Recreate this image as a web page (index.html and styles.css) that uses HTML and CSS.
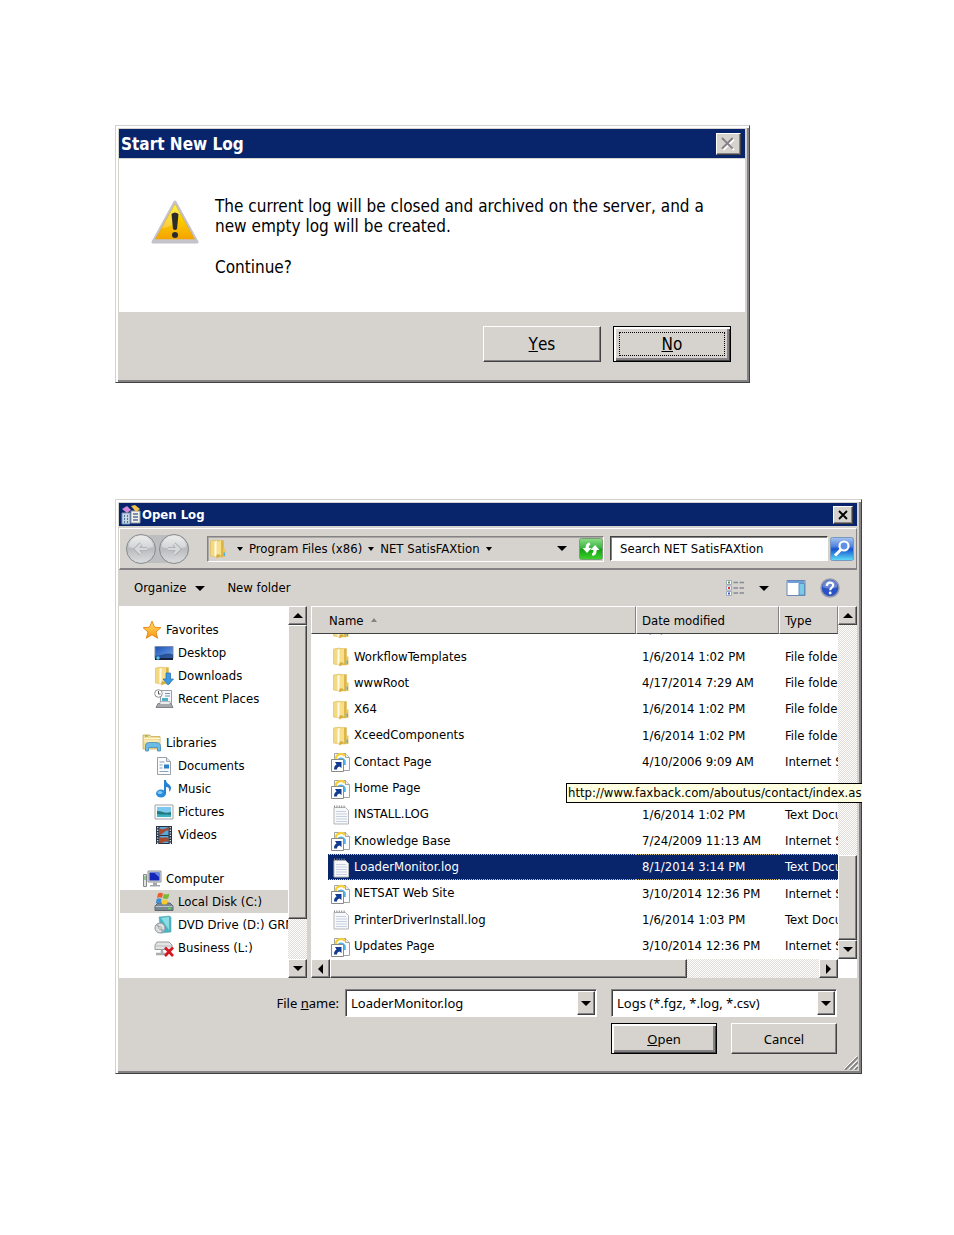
FILE: index.html
```html
<!DOCTYPE html>
<html lang="en">
<head>
    <meta charset="UTF-8">
    <meta name="viewport" content="width=device-width, initial-scale=1.0">
    <title>Start New Log / Open Log</title>
    <link rel="stylesheet" href="styles.css">
</head>
<body>
    <!-- Shared icons -->
    <svg class="sprite" aria-hidden="true">
        <defs>
            <linearGradient id="gFolder" x1="0" x2="1"><stop offset="0" stop-color="#f3d26a"/><stop offset="1" stop-color="#d9ad3e"/></linearGradient>
            <linearGradient id="gWarn" x1="0" y1="0" x2="0" y2="1"><stop offset="0" stop-color="#fff000"/><stop offset="1" stop-color="#f5a300"/></linearGradient>
            <linearGradient id="gOrb" x1="0" y1="0" x2="0" y2="1"><stop offset="0" stop-color="#e6e6e6"/><stop offset=".5" stop-color="#b9bbbd"/><stop offset="1" stop-color="#dcdedf"/></linearGradient>
            <linearGradient id="gScreen" x1="0" y1="0" x2="1" y2="1"><stop offset="0" stop-color="#1b50b5"/><stop offset="1" stop-color="#6fa6ea"/></linearGradient>
            <linearGradient id="gStar" x1="0" y1="0" x2="0" y2="1"><stop offset="0" stop-color="#ffe36a"/><stop offset="1" stop-color="#ff9412"/></linearGradient>
        </defs>
        <symbol id="folder" viewBox="0 0 20 20">
            <path d="M2.500 2l6-1v17l-6-1z" fill="#f3da82" stroke="#dcb95a" stroke-width=".6"/>
            <path d="M8 1.500h7.500V18H8z" fill="url(#gFolder)" stroke="#dcb95a" stroke-width=".5"/>
            <path d="M6.500 3L9 1.500v15L6.500 18z" fill="#fffbe8"/>
            <path d="M8.500 3L13 1.500V16l-4.500 3.500z" fill="#f7df8c"/>
            <path d="M8.500 19.500L12 17v-1.500H8.500z" fill="#d5ab3c"/>
            <path d="M15 9.500h2.500V18H15z" fill="#ecc65f"/>
            <path d="M15.500 13.500H17V17h-1.500z" fill="#4ab5dc"/>
        </symbol>
        <symbol id="weblink" viewBox="0 0 20 20">
            <path d="M3.500 1.500h11l4 4v13h-15z" fill="#fdfdfd" stroke="#a3a3a3"/>
            <path d="M14.500 1.500v4h4" fill="#eee" stroke="#a3a3a3"/>
            <path d="M5 7.500a5 4.500 0 0 1 9-3.500" fill="none" stroke="#f6cf3c" stroke-width="2.200"/>
            <path d="M7 8a4 4 0 0 1 6.500 1v4" fill="none" stroke="#4fb3ea" stroke-width="2.500"/>
            <path d="M.5 7.500h12v12H.5z" fill="#fff" stroke="#8a8a8a"/>
            <path d="M3 17.500c0-3 1-4 2.500-5L4 10h6.500v6L8.500 14.500c-2 .8-2.500 1.500-2.500 3z" fill="#123c91"/>
        </symbol>
        <symbol id="textfile" viewBox="0 0 20 20">
            <path d="M3 2.500h11.500l3 3v13.500H3z" fill="#f7f8fa" stroke="#b3b5ba"/>
            <path d="M3 1.500h11" stroke="#888" stroke-width="2" stroke-dasharray="1 1.400"/>
            <path d="M5 6.500h10M5 9h11M5 11.500h11M5 14h11M5 16.500h11" stroke="#c7cfe0"/>
        </symbol>
        <symbol id="star" viewBox="0 0 20 20">
            <path d="M10 1.200l2.500 6 6.300.5-4.800 4.200 1.600 6.300L10 14.800l-5.600 3.400L6 11.900 1.200 7.700l6.300-.5z" fill="url(#gStar)" stroke="#e88a1a" stroke-linejoin="round"/>
        </symbol>
        <symbol id="desktop" viewBox="0 0 20 20">
            <path d="M1 3.500h18v12H1z" fill="url(#gScreen)" stroke="#7d8ea8"/>
            <path d="M1 12.500c7 1 11-4 18-1v4H1z" fill="#173b7c" opacity=".7"/>
            <path d="M1 15h18v2H1z" fill="#16223c"/>
            <circle cx="4" cy="15" r="1.800" fill="#55c1ec"/>
        </symbol>
        <symbol id="downloads" viewBox="0 0 20 20">
            <use href="#folder" x="-1"/>
            <path d="M12 7h4.500v6h3L14.200 19 9 13h3z" fill="#3c9be0" stroke="#1c6cb4" stroke-width=".7"/>
        </symbol>
        <symbol id="recent" viewBox="0 0 20 20">
            <path d="M6.500 1.500h11v13h-11z" fill="#f5f7fa" stroke="#9ba0a8"/>
            <path d="M11 4.500h5M11 7h5" stroke="#7694bd"/>
            <path d="M8 9h6v3H8z" fill="#4cb0cc"/>
            <path d="M4 14.500l-2 4h17l-2-4z" fill="#a5a8ac" stroke="#808488"/>
            <path d="M6 12.500h10v3H6z" fill="#e8eaec" stroke="#90949a" stroke-width=".6"/>
            <circle cx="4.500" cy="4.500" r="3.800" fill="#fff" stroke="#8e9296"/>
            <path d="M4.500 2v3h2" fill="none" stroke="#555"/>
        </symbol>
        <symbol id="libraries" viewBox="0 0 20 20">
            <path d="M1 4V2h7l1 1.500h9V16H1z" fill="#f0dc95" stroke="#c9ab55" stroke-width=".8"/>
            <path d="M2 5.500h16M2 8h16" stroke="#fff7d3"/>
            <path d="M3 3h3" stroke="#5fae3e"/>
            <path d="M3.500 18v-5c0-3 2-3.500 5-3.500h4c4 0 6 1 6 4V18h-3v-3.500H6.500V18z" fill="#6cbbe4" stroke="#3e8cc0" stroke-width=".8"/>
        </symbol>
        <symbol id="documents" viewBox="0 0 20 20">
            <path d="M3.500 1.500h9l4 4v13h-13z" fill="#fbfcfd" stroke="#9aa0a8"/>
            <path d="M12.500 1.500v4h4" fill="#dfe5ec" stroke="#9aa0a8"/>
            <path d="M5.500 6h5M5.500 9h3M5.500 12h3M5.500 15.500h9" stroke="#8aa0bc"/>
            <path d="M10 8.500h5v4h-5z" fill="#2e7fc9"/>
        </symbol>
        <symbol id="music" viewBox="0 0 20 20">
            <ellipse cx="7" cy="14.500" rx="5" ry="4" fill="#2b8ddb"/>
            <path d="M10 15V1h2c0 4 5 4 5 8 0 2-1 3-2 4 1-4-1-5-3-5v7z" fill="#2484d4"/>
            <ellipse cx="6" cy="13.500" rx="2.500" ry="1.600" fill="#7ecbf5"/>
        </symbol>
        <symbol id="pictures" viewBox="0 0 20 20">
            <path d="M1 3h18v14H1z" fill="#fafafa" stroke="#a0a4a8"/>
            <path d="M3 5h14v10H3z" fill="#7cc8ef"/>
            <path d="M3 9c5 0 8 3 14 1v5H3z" fill="#237a7b"/>
            <path d="M3 12c5 1 9 0 14 1v2H3z" fill="#3bb1c4"/>
        </symbol>
        <symbol id="videos" viewBox="0 0 20 20">
            <path d="M2 1h16v18H2z" fill="#26323f"/>
            <path d="M5.500 2h9v8h-9zM5.500 11h9v7h-9z" fill="#58a8dc"/>
            <path d="M5.500 3c3 3 6 0 9-1v4c-3-2-5 3-9 4zM5.500 12c4 2 5-1 9 1v4c-4-2-6 2-9 1z" fill="#a84a2e"/>
            <path d="M3.700 2v17M16.300 2v17" stroke="#dce6ee" stroke-width="1.300" stroke-dasharray="1.300 1.300"/>
        </symbol>
        <symbol id="computer" viewBox="0 0 20 20">
            <path d="M6 2h13v11H6z" fill="#d6dade" stroke="#92969c"/>
            <path d="M7.500 3.500h10v8h-10z" fill="#1526b8"/>
            <path d="M12 3.500h5.500v5z" fill="#6487e5"/>
            <path d="M11 13.500h4v2.500h3v1.500H8V16h3z" fill="#a2a6aa"/>
            <path d="M1.500 5.500h3v12h-3z" fill="#e0e3e5" stroke="#84888c"/>
            <path d="M3 7v4" stroke="#42a943"/>
        </symbol>
        <symbol id="harddisk" viewBox="0 0 20 20">
            <path d="M4 11h12l3 3v4.500H1V14z" fill="#7b8791" stroke="#5d6871"/>
            <path d="M1.500 14.500h17" stroke="#bac3ca"/>
            <path d="M14 16.500h3" stroke="#54dd52" stroke-width="1.500"/>
            <path d="M4 1.500c2-1 3-1 5 0L8 6C6 5 5 5 3 6z" fill="#ea5c28"/>
            <path d="M9.800 1.800c2 1 3 1 5.500 0l-1 4.500c-2 1-3 1-5.500 0z" fill="#78b936"/>
            <path d="M2.600 7c2-1 3-1 5 0l-.8 4.500c-2-1-3-1-5 0z" fill="#3e8dd8"/>
            <path d="M8.500 7.300c2 1 3 1 5.500 0l-.8 4.500c-2.500 1-3.500 1-5.500 0z" fill="#f7ca30"/>
        </symbol>
        <symbol id="dvd" viewBox="0 0 20 20">
            <path d="M5 2l10-1 2 1v15l-10 1z" fill="#48b5c4" stroke="#64a5b0" stroke-width=".6"/>
            <path d="M7 3l8-1v13z" fill="#8bdce5"/>
            <circle cx="6" cy="13" r="5" fill="#dce0e3" stroke="#8e9499"/>
            <path d="M6 13l-4-2.500L4 9zM6 13l4 2-2 2.500z" fill="#9fa7af"/>
            <circle cx="6" cy="13" r="1.300" fill="#fff" stroke="#777" stroke-width=".6"/>
        </symbol>
        <symbol id="netdrive" viewBox="0 0 20 20">
            <path d="M3 4h12l3 3v4.500H1V7z" fill="#e2e4e5" stroke="#999c9e"/>
            <path d="M1 8h17" stroke="#b7babc"/>
            <path d="M8 12v4H2m6 0h6" fill="none" stroke="#a9adb0" stroke-width="2.500"/>
            <path d="M11 9.500l8 8.500M19 9.500L11 18" stroke="#d8151c" stroke-width="2.600"/>
        </symbol>
    </svg>

    <main class="page">
        <section class="window message-box" role="dialog" aria-labelledby="msgTitle">
            <header class="title-bar">
                <h1 class="title-text" id="msgTitle">Start New Log</h1>
                <button type="button" class="btn close-btn" aria-label="Close" disabled>
                    <svg viewBox="0 0 12 12"><path d="M2.500 2.500l8 8M10.500 2.500l-8 8" stroke="#fff" stroke-width="1.500"/><path d="M1.500 1.500l8 8M9.500 1.500l-8 8" stroke="#848284" stroke-width="1.500"/></svg>
                </button>
            </header>
            <div class="message-body">
                <svg class="warn-icon" viewBox="0 0 48 44" aria-hidden="true">
                    <path d="M24 2L46 42H2z" fill="#c9c9cf" stroke="#c3c3ca" stroke-width="3" stroke-linejoin="round"/>
                    <path d="M24 4L43.500 39H4.500z" fill="url(#gWarn)" stroke="#e3a51a" stroke-width=".6"/>
                    <path d="M24 4l5 9c-2 9-8 14-18 15z" fill="#fff" opacity=".25"/>
                    <path d="M20.500 14q3.500-3 7 0l-1.500 15q-2 2-4 0z" fill="#2b2b2b"/>
                    <circle cx="24" cy="35" r="3" fill="#2b2b2b"/>
                </svg>
                <div class="message-text">
                    <p>The current log will be closed and archived on the server, and a<br>new empty log will be created.</p>
                    <p>Continue?</p>
                </div>
            </div>
            <footer class="message-actions">
                <button type="button" class="btn"><u>Y</u>es</button>
                <button type="button" class="btn default focused"><u>N</u>o</button>
            </footer>
        </section>

        <section class="window open-dialog" role="dialog" aria-labelledby="openTitle">
            <header class="title-bar">
                <svg class="app-icon" viewBox="0 0 20 20" aria-hidden="true">
                    <path d="M1 8h8v11H1z" fill="#c3d5e6" stroke="#7894b3"/>
                    <path d="M3 11h1M6 11h1M3 14h1M6 14h1M3 17h1M6 17h1" stroke="#33577e" stroke-width="1.500"/>
                    <path d="M10 6h9v12h-9z" fill="#f2f2e8" stroke="#8f9ba8"/>
                    <path d="M12 9h5M12 12h5M12 15h5" stroke="#4d6fa0" stroke-width="1.500"/>
                    <path d="M1 4l5-3 4 4-4 3z" fill="#d08ad6"/>
                    <path d="M10 1l4-1 5 4-4 3z" fill="#f2c14a"/>
                </svg>
                <h2 class="title-text" id="openTitle">Open Log</h2>
                <button type="button" class="btn close-btn" aria-label="Close">
                    <svg viewBox="0 0 12 12"><path d="M2 2l8 8M10 2l-8 8" stroke="#000" stroke-width="1.800"/></svg>
                </button>
            </header>

            <div class="address-row">
                <svg class="nav-orbs" viewBox="0 0 66 32" role="img" aria-label="Back and forward">
                    <path d="M16 2h34a14 14 0 0 1 0 28H16z" fill="#bcbec0"/>
                    <circle cx="16" cy="16" r="14.500" fill="url(#gOrb)" stroke="#85898d"/>
                    <circle cx="49" cy="16" r="14.500" fill="url(#gOrb)" stroke="#85898d"/>
                    <path d="M4 14a12 11 0 0 1 24 0q-12 4-24 0zM37 14a12 11 0 0 1 24 0q-12 4-24 0z" fill="#fff" opacity=".35"/>
                    <path d="M22 16H11m5-5l-5 5 5 5M43 16h11m-5-5l5 5-5 5" fill="none" stroke="#a4a7aa" stroke-width="4"/>
                    <path d="M22 16H11m5-5l-5 5 5 5M43 16h11m-5-5l5 5-5 5" fill="none" stroke="#d6d8d9" stroke-width="2.500"/>
                </svg>
                <nav class="address-bar" aria-label="Address">
                    <svg class="icon"><use href="#folder"/></svg>
                    <span class="caret small"></span>
                    <a href="#">Program Files (x86)</a>
                    <span class="caret small"></span>
                    <a href="#">NET SatisFAXtion</a>
                    <span class="caret small"></span>
                    <span class="caret history"></span>
                    <button type="button" class="icon-btn" aria-label="Refresh">
                        <svg viewBox="0 0 24 22">
                            <defs><linearGradient id="gGreen" x1="0" y1="0" x2="0" y2="1"><stop offset="0" stop-color="#8ade84"/><stop offset=".45" stop-color="#3bb443"/><stop offset=".5" stop-color="#10a010"/><stop offset="1" stop-color="#3fd22c"/></linearGradient></defs>
                            <rect x=".5" y=".5" width="23" height="21" rx="2" fill="url(#gGreen)" stroke="#78a078"/>
                            <path d="M10.500 4.500C7.500 5 6.500 7 6.500 10H3.500l4.500 5 4.500-5H9.800c0-2 .4-3 1.700-3.500zM13.500 18c3-.5 4.200-2.500 4.200-6h2.800L16 7l-4.500 5h3c0 2-.4 3-1.700 3.500z" fill="#fff"/>
                        </svg>
                    </button>
                </nav>
                <input class="search-box" type="text" aria-label="Search" value="Search NET SatisFAXtion">
                <button type="button" class="icon-btn" aria-label="Run search">
                    <svg viewBox="0 0 24 24">
                        <defs><linearGradient id="gBlue" x1="0" y1="0" x2="0" y2="1"><stop offset="0" stop-color="#a7c4f0"/><stop offset=".4" stop-color="#4c80dd"/><stop offset=".5" stop-color="#1552cf"/><stop offset="1" stop-color="#5fe0f8"/></linearGradient></defs>
                        <rect x=".5" y=".5" width="23" height="23" rx="2" fill="url(#gBlue)" stroke="#7898bf"/>
                        <circle cx="14" cy="9" r="4.500" fill="#5d92e6" stroke="#fff" stroke-width="2.200"/>
                        <path d="M11 12.500l-6 6" stroke="#fff" stroke-width="3"/>
                    </svg>
                </button>
            </div>

            <div class="command-bar">
                <button type="button" class="command">Organize<span class="caret"></span></button>
                <button type="button" class="command">New folder</button>
                <div class="view-tools">
                    <button type="button" class="command" aria-label="Change view">
                        <svg class="icon" viewBox="0 0 20 20">
                            <path d="M1.500 2.500h5v4h-5zM1.500 8h5v4h-5zM1.500 13.500h5v4h-5z" fill="#fff" stroke="#a3a6bd"/>
                            <path d="M3 4.500h2" stroke="#4ca04c" stroke-width="2"/><path d="M3 10h2" stroke="#e03030" stroke-width="2"/><path d="M3 15.500h2" stroke="#3060d0" stroke-width="2"/>
                            <path d="M8.500 4.500h4.500M14.500 4.500H19M8.500 10H13M14.500 10H19M8.500 15h4.500M14.500 15H19" stroke="#858b99" stroke-width="1.500"/>
                        </svg>
                        <span class="caret"></span>
                    </button>
                    <button type="button" class="command" aria-label="Preview pane">
                        <svg class="icon" viewBox="0 0 20 20">
                            <path d="M1 2.500h18v15H1z" fill="#fff" stroke="#6c86b3"/>
                            <path d="M1.500 3h17v2h-17z" fill="#6ea0dc"/>
                            <path d="M13 5.500h5.500V17H13z" fill="#7bc8e8" stroke="#5e92bd"/>
                        </svg>
                    </button>
                    <button type="button" class="command" aria-label="Help">
                        <svg class="icon" viewBox="0 0 20 20">
                            <circle cx="10" cy="10" r="9" fill="#2b52c4" stroke="#9299aa" stroke-width="1.500"/>
                            <path d="M2.500 9a7.500 7 0 0 1 15 0q-7 3-15 0z" fill="#fff" opacity=".3"/>
                            <path d="M6.800 8c0-4.500 6.400-4.300 6.400-.8 0 2.300-3 2.300-3 5" fill="none" stroke="#fff" stroke-width="2.200"/>
                            <circle cx="10.200" cy="15" r="1.400" fill="#fff"/>
                        </svg>
                    </button>
                </div>
            </div>

            <div class="explorer">
                <nav class="tree" aria-label="Folders">
                    <ul class="tree-group">
                        <li class="tree-head"><svg class="icon"><use href="#star"/></svg>Favorites</li>
                        <li><svg class="icon"><use href="#desktop"/></svg>Desktop</li>
                        <li><svg class="icon"><use href="#downloads"/></svg>Downloads</li>
                        <li><svg class="icon"><use href="#recent"/></svg>Recent Places</li>
                    </ul>
                    <ul class="tree-group">
                        <li class="tree-head"><svg class="icon"><use href="#libraries"/></svg>Libraries</li>
                        <li><svg class="icon"><use href="#documents"/></svg>Documents</li>
                        <li><svg class="icon"><use href="#music"/></svg>Music</li>
                        <li><svg class="icon"><use href="#pictures"/></svg>Pictures</li>
                        <li><svg class="icon"><use href="#videos"/></svg>Videos</li>
                    </ul>
                    <ul class="tree-group">
                        <li class="tree-head"><svg class="icon"><use href="#computer"/></svg>Computer</li>
                        <li class="current"><svg class="icon"><use href="#harddisk"/></svg>Local Disk (C:)</li>
                        <li><svg class="icon"><use href="#dvd"/></svg>DVD Drive (D:) GRMSXVOL</li>
                        <li><svg class="icon"><use href="#netdrive"/></svg>Business (L:)</li>
                    </ul>
                </nav>
                <div class="scrollbar vertical">
                    <button type="button" class="btn" aria-label="Scroll up"><span class="arrow up"></span></button>
                    <div class="track"><div class="thumb tree-thumb"></div></div>
                    <button type="button" class="btn" aria-label="Scroll down"><span class="arrow down"></span></button>
                </div>

                <div class="file-pane">
                    <div class="file-view">
                        <div class="file-list">
                            <table class="files">
                                <thead>
                                    <tr><th class="col-name">Name<span class="sort"></span></th><th class="col-date">Date modified</th><th class="col-type">Type</th></tr>
                                </thead>
                                <tbody>
                                    <tr class="cut"><td><div><svg class="icon"><use href="#folder"/></svg></div></td><td><div>1/6/2014 1:02 PM</div></td><td></td></tr>
                                    <tr><td><svg class="icon"><use href="#folder"/></svg>WorkflowTemplates</td><td>1/6/2014 1:02 PM</td><td>File folder</td></tr>
                                    <tr><td><svg class="icon"><use href="#folder"/></svg>wwwRoot</td><td>4/17/2014 7:29 AM</td><td>File folder</td></tr>
                                    <tr><td><svg class="icon"><use href="#folder"/></svg>X64</td><td>1/6/2014 1:02 PM</td><td>File folder</td></tr>
                                    <tr><td><svg class="icon"><use href="#folder"/></svg>XceedComponents</td><td>1/6/2014 1:02 PM</td><td>File folder</td></tr>
                                    <tr><td><svg class="icon"><use href="#weblink"/></svg>Contact Page</td><td>4/10/2006 9:09 AM</td><td>Internet Shortcut</td></tr>
                                    <tr><td><svg class="icon"><use href="#weblink"/></svg>Home Page</td><td>1/6/2014 1:02 PM</td><td>Internet Shortcut</td></tr>
                                    <tr><td><svg class="icon"><use href="#textfile"/></svg>INSTALL.LOG</td><td>1/6/2014 1:02 PM</td><td>Text Document</td></tr>
                                    <tr><td><svg class="icon"><use href="#weblink"/></svg>Knowledge Base</td><td>7/24/2009 11:13 AM</td><td>Internet Shortcut</td></tr>
                                    <tr class="selected"><td><svg class="icon"><use href="#textfile"/></svg>LoaderMonitor.log</td><td>8/1/2014 3:14 PM</td><td>Text Document</td></tr>
                                    <tr><td><svg class="icon"><use href="#weblink"/></svg>NETSAT Web Site</td><td>3/10/2014 12:36 PM</td><td>Internet Shortcut</td></tr>
                                    <tr><td><svg class="icon"><use href="#textfile"/></svg>PrinterDriverInstall.log</td><td>1/6/2014 1:03 PM</td><td>Text Document</td></tr>
                                    <tr><td><svg class="icon"><use href="#weblink"/></svg>Updates Page</td><td>3/10/2014 12:36 PM</td><td>Internet Shortcut</td></tr>
                                </tbody>
                            </table>
                        </div>
                        <div class="scrollbar vertical">
                            <button type="button" class="btn" aria-label="Scroll up"><span class="arrow up"></span></button>
                            <div class="track bottom"><div class="thumb file-thumb"></div></div>
                            <button type="button" class="btn" aria-label="Scroll down"><span class="arrow down"></span></button>
                        </div>
                    </div>
                    <div class="scrollbar horizontal">
                        <button type="button" class="btn" aria-label="Scroll left"><span class="arrow left"></span></button>
                        <div class="track"><div class="thumb wide-thumb"></div></div>
                        <button type="button" class="btn" aria-label="Scroll right"><span class="arrow right"></span></button>
                    </div>
                </div>
            </div>

            <form class="file-form">
                <div class="form-row">
                    <label for="fileName">File <u>n</u>ame:</label>
                    <div class="combo combo-name">
                        <input id="fileName" type="text" value="LoaderMonitor.log">
                        <button type="button" class="btn" aria-label="Previous files"><span class="arrow down"></span></button>
                    </div>
                    <div class="combo combo-type">
                        <select aria-label="File type"><option>Logs (*.fgz, *.log, *.csv)</option></select>
                        <span class="btn drop"><span class="arrow down"></span></span>
                    </div>
                </div>
                <div class="form-row">
                    <button type="button" class="btn default"><u>O</u>pen</button>
                    <button type="button" class="btn">Cancel</button>
                </div>
            </form>

            <div class="tooltip" role="tooltip">http://www.faxback.com/aboutus/contact/index.asp</div>
            <svg class="grip" viewBox="0 0 14 14" aria-hidden="true">
                <path d="M1 14L14 1M6 14l8-8M11 14l3-3" stroke="#848284" stroke-width="1.800"/>
                <path d="M0 13L13 0M5 13l8-8M10 13l4-4" stroke="#fff"/>
            </svg>
        </section>
    </main>
</body>
</html>
```
FILE: styles.css
```css
:root {
    --face: #d6d3ce;
    --shadow: #848284;
    --dark: #424142;
    --navy: #08246b;
}

* {
    margin: 0;
    padding: 0;
    box-sizing: border-box;
}

body {
    font-family: "DejaVu Sans Condensed", "DejaVu Sans", Tahoma, sans-serif;
    font-size: 13px;
    line-height: 20px;
    color: #000;
    background: #fff;
}

button,
input,
select {
    font: inherit;
    color: inherit;
}

ul {
    list-style: none;
}

.sprite {
    position: absolute;
    width: 0;
    height: 0;
}

.page {
    display: flex;
    flex-direction: column;
    gap: 116px;
    padding: 125px 92px 80px 115px;
}

.icon {
    width: 20px;
    height: 20px;
    flex: none;
}

/* Window chrome */
.window {
    position: relative;
    background: var(--face);
    border: 1px solid;
    border-color: var(--face) var(--dark) var(--dark) var(--face);
    box-shadow: inset 2px 2px #fff, inset -2px -2px var(--shadow);
    padding: 3px 4px 4px 3px;
}

.title-bar {
    display: flex;
    align-items: center;
    background: var(--navy);
    color: #fff;
    padding: 0 4px 0 2px;
}

.title-text {
    flex: 1;
    font-size: 13px;
    font-weight: bold;
}

.app-icon {
    width: 20px;
    height: 20px;
    margin-right: 1px;
}

/* Raised 3D button */
.btn {
    display: flex;
    align-items: center;
    justify-content: center;
    background: var(--face);
    border: 1px solid;
    border-color: #fff var(--dark) var(--dark) #fff;
    box-shadow: inset -1px -1px var(--shadow);
}

.btn.default {
    border-color: #000;
    box-shadow: inset 2px 2px #fff, inset -1px -1px var(--dark), inset -3px -3px var(--shadow);
}

.btn.focused {
    position: relative;
}

.btn.focused::after {
    content: "";
    position: absolute;
    inset: 5px;
    border: 1px dotted #000;
}

.close-btn {
    width: 20px;
    height: 18px;
}

.close-btn svg {
    width: 12px;
    height: 12px;
}

/* Message box */
.message-box {
    width: 85%;
}

.message-box .title-bar {
    height: 29px;
}

.message-box .title-text {
    font-size: 17px;
}

.message-box .close-btn {
    width: 25px;
    height: 22px;
}

.message-box .close-btn svg {
    width: 16px;
    height: 16px;
}

.message-body {
    display: flex;
    gap: 16px;
    margin-top: 1px;
    padding: 37px 32px 35px;
    background: #fff;
}

.warn-icon {
    width: 48px;
    height: 44px;
    margin-top: 4px;
    flex: none;
}

.message-text {
    display: flex;
    flex-direction: column;
    gap: 21px;
    font-size: 17px;
}

.message-actions {
    display: flex;
    justify-content: flex-end;
    gap: 12px;
    padding: 14px 14px 16px;
    font-size: 17px;
}

.message-actions .btn {
    width: 118px;
    height: 36px;
}

/* Arrows */
.caret {
    display: inline-block;
    border: 5px solid transparent;
    border-top-color: #000;
    border-bottom: 0;
}

.caret.small {
    border-width: 4px 3px 0;
}

.arrow {
    border: 5px solid transparent;
}

.arrow.up {
    border-top: 0;
    border-bottom-color: #000;
}

.arrow.down {
    border-bottom: 0;
    border-top-color: #000;
}

.arrow.left {
    border-left: 0;
    border-right-color: #000;
}

.arrow.right {
    border-right: 0;
    border-left-color: #000;
}

/* Open dialog */
.open-dialog .title-bar {
    height: 23px;
}

.address-row {
    display: flex;
    align-items: center;
    height: 42px;
    margin-top: 2px;
    padding: 0 2px 0 5px;
    border: 1px solid;
    border-color: #fff var(--shadow) var(--shadow) #fff;
    border-bottom-width: 2px;
}

.nav-orbs {
    width: 66px;
    height: 32px;
    flex: none;
}

.address-bar {
    display: flex;
    flex: 1;
    align-items: center;
    gap: 6px;
    height: 26px;
    margin: 0 6px 0 16px;
    border: 1px solid;
    border-color: var(--shadow) #fff #fff var(--shadow);
    box-shadow: inset 1px 1px #aaa8a4;
}

.address-bar a {
    color: inherit;
    text-decoration: none;
    white-space: nowrap;
}

.address-bar .icon {
    margin-right: 3px;
}

.address-bar .caret.history {
    margin: 0 6px 0 auto;
}

.icon-btn {
    width: 24px;
    height: 24px;
    flex: none;
    background: none;
    border: 0;
}

.icon-btn svg {
    display: block;
    width: 24px;
    height: 24px;
}

.search-box {
    width: 218px;
    height: 25px;
    margin-right: 2px;
    padding: 0 9px;
    background: #fff;
    border: 1px solid;
    border-color: var(--dark) #fff #fff var(--dark);
    box-shadow: inset 1px 1px var(--shadow);
}

.command-bar {
    display: flex;
    align-items: center;
    gap: 22px;
    height: 36px;
    padding: 0 17px 0 15px;
}

.command {
    display: flex;
    align-items: center;
    gap: 9px;
    background: none;
    border: 0;
}

.view-tools {
    display: flex;
    gap: 14px;
    margin-left: auto;
}

.view-tools .command:first-child {
    gap: 14px;
    margin-right: 3px;
}

.explorer {
    display: flex;
    height: 372px;
}

.tree {
    display: flex;
    flex-direction: column;
    gap: 21px;
    width: 169px;
    padding: 12px 0 0 1px;
    background: #fff;
    overflow: hidden;
    flex: none;
}

.tree li {
    display: flex;
    align-items: center;
    gap: 4px;
    height: 23px;
    padding-left: 34px;
    white-space: nowrap;
}

.tree .tree-head {
    padding-left: 22px;
}

.tree .current {
    background: var(--face);
}

/* Scrollbars */
.scrollbar {
    display: flex;
    flex: none;
}

.scrollbar.vertical {
    flex-direction: column;
    width: 19px;
}

.scrollbar .btn {
    width: 19px;
    height: 19px;
    flex: none;
}

.track {
    display: flex;
    flex: 1;
    background: repeating-conic-gradient(#fff 0 25%, #dedbd7 0 50%) 0 0 / 2px 2px;
}

.vertical .track {
    flex-direction: column;
}

.track.bottom {
    justify-content: flex-end;
}

.thumb {
    background: var(--face);
    border: 1px solid;
    border-color: #fff var(--dark) var(--dark) #fff;
    box-shadow: inset -1px -1px var(--shadow);
}

.tree-thumb {
    height: 88%;
}

.file-thumb {
    height: 85px;
}

.wide-thumb {
    width: 73%;
}

/* File list */
.file-pane {
    display: flex;
    flex: 1;
    flex-direction: column;
    min-width: 0;
    margin-left: 4px;
    background: #fff;
}

.file-view {
    display: flex;
    height: 353px;
}

.file-list {
    flex: 1;
    min-width: 0;
    overflow: hidden;
}

.scrollbar.horizontal {
    margin-right: 19px;
}

.files {
    width: 100%;
    height: 353px;
    table-layout: fixed;
    border-collapse: separate;
    border-spacing: 0;
}

.files th {
    height: 28px;
    padding: 2px 0 0 5px;
    font-weight: normal;
    text-align: left;
    background: var(--face);
    border: 1px solid;
    border-color: #fff var(--shadow) var(--dark) #fff;
}

.files .col-name {
    padding-left: 17px;
}

.col-date {
    width: 143px;
}

.col-type {
    width: 59px;
}

.sort {
    display: inline-block;
    margin: 0 0 3px 7px;
    border: 3px solid transparent;
    border-top: 0;
    border-bottom: 4px solid var(--shadow);
}

.files td {
    height: 26px;
    padding: 1px 0 0 6px;
    white-space: nowrap;
    overflow: hidden;
}

.files td:first-child {
    padding-left: 20px;
}

.files td .icon {
    margin-right: 3px;
    vertical-align: middle;
}

.files .cut td {
    height: 9px;
    padding-top: 0;
}

.cut div {
    display: flex;
    align-items: flex-end;
    height: 9px;
    padding-bottom: 4px;
    overflow: hidden;
}

.selected td {
    color: #fff;
    background: var(--navy);
    border: dotted #d8c878;
    border-width: 1px 0;
}

/* The highlight starts to the right of the cell's left edge */
.selected td:first-child {
    clip-path: inset(0 0 0 17px);
}

/* File name form */
.file-form {
    display: flex;
    flex-direction: column;
    gap: 6px;
    padding: 11px 20px 15px;
    font-family: "Noto Sans", "Open Sans", sans-serif;
}

.form-row {
    display: flex;
    align-items: center;
    justify-content: flex-end;
    gap: 14px;
}

.form-row label {
    margin-right: -8px;
}

.form-row > .btn {
    width: 106px;
    height: 31px;
}

.combo {
    display: flex;
    height: 28px;
    padding: 1px;
    background: #fff;
    border: 1px solid;
    border-color: var(--shadow) #fff #fff var(--shadow);
    box-shadow: inset 1px 1px var(--dark);
}

.combo-name {
    width: 252px;
}

.combo-type {
    width: 226px;
}

.combo input,
.combo select {
    flex: 1;
    min-width: 0;
    padding-left: 4px;
    background: none;
    border: 0;
    appearance: none;
}

.combo .btn {
    width: 18px;
    height: 24px;
}

.drop {
    pointer-events: none;
}

.tooltip {
    position: absolute;
    top: 283px;
    left: 450px;
    right: -1px;
    height: 20px;
    line-height: 18px;
    padding-left: 1px;
    white-space: nowrap;
    overflow: hidden;
    background: #ffffe1;
    border: 1px solid #000;
    border-right: 0;
}

.grip {
    position: absolute;
    right: 3px;
    bottom: 3px;
    width: 14px;
    height: 14px;
}
```
